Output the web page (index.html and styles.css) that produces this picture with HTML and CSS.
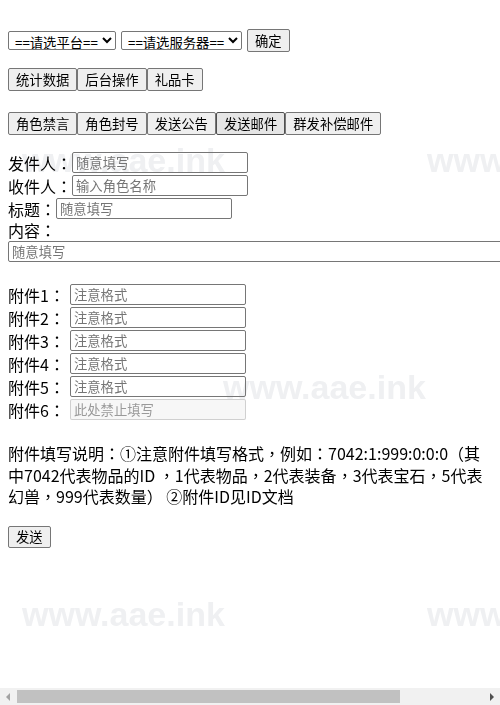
FILE: index.html
```html
<!DOCTYPE html>
<html lang="zh-CN">
<head>
<meta charset="utf-8">
<title>邮件</title>
<link rel="stylesheet" href="styles.css">
</head>
<body>
<div class="watermarks" aria-hidden="true">
  <span class="wm wm-a">www.aae.ink</span>
  <span class="wm wm-b">www.aae.ink</span>
  <span class="wm wm-c">www.aae.ink</span>
  <span class="wm wm-d">www.aae.ink</span>
  <span class="wm wm-e">www.aae.ink</span>
</div>
<main class="page">
  <div class="row row-top">
    <select class="sel sel-platform"><option>==请选平台==</option></select>
    <select class="sel sel-server"><option>==请选服务器==</option></select>
    <button class="btn">确定</button>
  </div>
  <div class="row row-nav"><button class="btn">统计数据</button><button class="btn">后台操作</button><button class="btn">礼品卡</button></div>
  <div class="row row-tabs"><button class="btn">角色禁言</button><button class="btn">角色封号</button><button class="btn">发送公告</button><button class="btn btn-active">发送邮件</button><button class="btn">群发补偿邮件</button></div>

  <form class="mail">
    <div class="field"><span>发件人<span class="p">：</span></span><input class="inp" placeholder="随意填写"></div>
    <div class="field"><span>收件人<span class="p">：</span></span><input class="inp" placeholder="输入角色名称"></div>
    <div class="field"><span>标题<span class="p">：</span></span><input class="inp" placeholder="随意填写"></div>
    <div class="label-line">内容<span class="p">：</span></div>
    <input class="inp inp-wide" placeholder="随意填写">

    <div class="attachments">
      <div class="field"><span>附件1<span class="p">：</span></span><input class="inp inp-att" placeholder="注意格式"></div>
      <div class="field"><span>附件2<span class="p">：</span></span><input class="inp inp-att" placeholder="注意格式"></div>
      <div class="field"><span>附件3<span class="p">：</span></span><input class="inp inp-att" placeholder="注意格式"></div>
      <div class="field"><span>附件4<span class="p">：</span></span><input class="inp inp-att" placeholder="注意格式"></div>
      <div class="field"><span>附件5<span class="p">：</span></span><input class="inp inp-att" placeholder="注意格式"></div>
      <div class="field"><span>附件6<span class="p">：</span></span><input class="inp inp-att" placeholder="此处禁止填写" disabled></div>
    </div>

    <p class="note">附件填写说明<span class="p">：</span>①注意附件填写格式<span class="p">，</span>例如<span class="p">：</span>7042:1:999:0:0:0<span class="p">（</span>其中7042代表物品的ID <span class="p">，</span>1代表物品<span class="p">，</span>2代表装备<span class="p">，</span>3代表宝石<span class="p">，</span>5代表幻兽<span class="p">，</span>999代表数量<span class="p">）</span> ②附件ID见ID文档</p>

    <button type="button" class="btn btn-send">发送</button>
  </form>
</main>
<div class="hscroll" aria-hidden="true">
  <span class="hs-arrow hs-left"></span>
  <span class="hs-track"><span class="hs-thumb"></span></span>
  <span class="hs-arrow hs-right"></span>
</div>
</body>
</html>
```
FILE: styles.css
```css
html, body {
  margin: 0;
  padding: 0;
  background: #fff;
}
html {
  overflow: hidden;
}
body {
  font-family: "Noto Sans CJK SC", "Noto Sans", sans-serif;
  font-size: 16px;
  color: #000;
  padding: 8px;
  min-height: 705px;
  box-sizing: border-box;
}
/* centred full-width punctuation */
.p {
  font-family: "Noto Sans CJK TC", "Noto Sans CJK SC", sans-serif;
  font-feature-settings: "locl" 0;
}
.watermarks {
  position: fixed;
  left: 0;
  top: 0;
  width: 500px;
  height: 705px;
  overflow: hidden;
  z-index: 0;
  pointer-events: none;
}
.wm {
  position: absolute;
  font-family: "Liberation Sans", Arial, sans-serif;
  font-weight: bold;
  font-size: 34px;
  line-height: 1;
  color: #eff0f2;
  white-space: nowrap;
}
.wm-a { left: 22px; top: 143px; }
.wm-b { left: 427px; top: 143px; }
.wm-c { left: 223px; top: 370px; }
.wm-d { left: 22px; top: 597px; }
.wm-e { left: 427px; top: 597px; }

.page {
  position: relative;
  z-index: 1;
}
.row {
  display: flex;
  align-items: center;
}
.row-top {
  margin-top: 21px;
  gap: 5px;
}
.row-nav {
  margin-top: 16px;
}
.row-tabs {
  margin-top: 21px;
}
.sel {
  font-family: "Noto Sans CJK SC", sans-serif;
  font-size: 13.33px;
  height: 19px;
  padding: 0 0 0 2px;
  border: 1px solid #767676;
  border-radius: 2px;
  background: #fff;
  color: #000;
  line-height: 17px;
}
.sel-platform { width: 108px; }
.sel-server { width: 121px; }
.btn {
  font-family: "Noto Sans CJK SC", sans-serif;
  font-size: 13.33px;
  line-height: 19px;
  height: 23px;
  padding: 1px 7px;
  border: 1px solid #767676;
  border-radius: 2px;
  background: #efefef;
  color: #000;
  box-sizing: border-box;
}
.btn-active {
  background: #e5e5e5;
  border-color: #4f4f4f;
}
.mail {
  margin-top: 16px;
}
.field {
  display: flex;
  align-items: center;
  height: 23px;
}
.label-line {
  height: 21px;
  line-height: 21px;
}
.inp {
  font-family: "Noto Sans CJK SC", sans-serif;
  font-size: 13.33px;
  box-sizing: border-box;
  width: 176px;
  height: 21px;
  padding: 0 3px;
  border: 1px solid #767676;
  border-radius: 2px;
  background: transparent;
  color: #000;
}
.inp::placeholder {
  color: #757575;
}
.inp-wide {
  display: block;
  width: 600px;
}
.attachments {
  margin-top: 21px;
}
.inp-att {
  margin-left: 5px;
}
.inp:disabled {
  background: rgba(239, 239, 239, 0.5);
  border-color: rgba(118, 118, 118, 0.3);
}
.inp:disabled::placeholder {
  color: #9a9a9a;
}
.note {
  margin: 22px 0 0;
  line-height: 21.5px;
}
.btn-send {
  margin-top: 18px;
  height: 22px;
  padding: 0 7px;
}

/* horizontal scrollbar overlay */
.hscroll {
  position: fixed;
  left: 0;
  bottom: 0;
  width: 500px;
  height: 17px;
  background: #f1f1f1;
  display: flex;
  align-items: center;
  z-index: 2;
}
.hs-arrow {
  width: 16px;
  height: 17px;
  display: flex;
  align-items: center;
  justify-content: center;
}
.hs-left::before {
  content: "";
  border-style: solid;
  border-width: 4px 4px 4px 0;
  border-color: transparent #a3a3a3 transparent transparent;
}
.hs-right::before {
  content: "";
  border-style: solid;
  border-width: 4px 0 4px 4px;
  border-color: transparent transparent transparent #505050;
}
.hs-track {
  flex: 1;
  height: 17px;
  display: flex;
  align-items: center;
}
.hs-thumb {
  margin-left: 1px;
  width: 383px;
  height: 13px;
  background: #c1c1c1;
}
```
